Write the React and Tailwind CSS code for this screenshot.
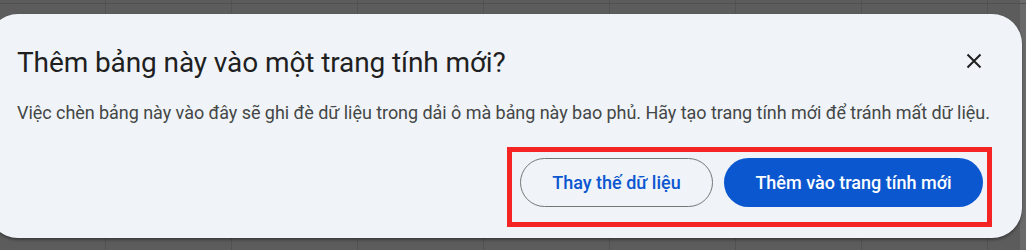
export default function App() {
  return (
    <div
      className="relative w-[1026px] h-[250px] overflow-hidden bg-[#5c5c5c] bg-[linear-gradient(to_right,#525252_1px,transparent_1px)] bg-[length:126px_100%] bg-[position:105px_0]"
      style={{ fontFamily: "Roboto, 'Noto Sans', sans-serif" }}
    >
      <div className="absolute right-0 top-0 w-[6px] h-[250px] bg-[#6a6a6a]" />
      <div className="absolute left-0 top-[3px] w-[1026px] h-px bg-[#505050]" />
      <div className="relative mt-[14px] ml-[-12px] w-[1034px] h-[224px] rounded-[30px] bg-[#f0f4f9] shadow-[0_2px_3px_rgba(0,0,0,0.35)] flex flex-col pl-[29px] pr-[30px]">
        <div className="flex items-center justify-between pt-[31px]">
          <h1 className="text-[28px] leading-[36px] text-[#1f1f1f] font-normal tracking-[-0.1px]">
            Thêm bảng này vào một trang tính mới?
          </h1>
          <svg width="16" height="16" viewBox="0 0 16 16" className="mr-[10px] mt-[-4px]">
            <path d="M1.5 1.5 L14.5 14.5 M14.5 1.5 L1.5 14.5" stroke="#1f1f1f" strokeWidth="2" fill="none" />
          </svg>
        </div>
        <p className="mt-[20px] text-[18px] leading-[24px] text-[#444746] tracking-[-0.05px]">
          Việc chèn bảng này vào đây sẽ ghi đè dữ liệu trong dải ô mà bảng này bao phủ. Hãy tạo trang tính mới để tránh mất dữ liệu.
        </p>
        <div className="flex justify-end mt-[22px]">
          <div className="flex gap-[11px] border-[5px] border-[#f52424] pl-[8px] pt-[6px] pb-[15px] pr-[4px]">
            <button className="w-[193px] h-[49px] rounded-full border border-[#747775] text-[#0b57d0] text-[18px] font-medium">
              Thay thế dữ liệu
            </button>
            <button className="w-[259px] h-[49px] rounded-full bg-[#0b57d0] text-white text-[18px] font-medium">
              Thêm vào trang tính mới
            </button>
          </div>
        </div>
      </div>
    </div>
  );
}
